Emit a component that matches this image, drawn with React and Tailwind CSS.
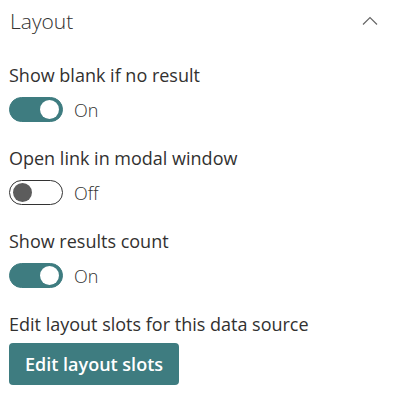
import { useState } from 'react';

function Toggle({ checked, onChange }) {
	return (
		<button
			type="button"
			onClick={onChange}
			className="flex items-center gap-[11px]"
		>
			<span
				className={`flex h-[25px] w-[54px] items-center rounded-full px-[3px] ${
					checked
						? 'justify-end border border-[#3e7c80] bg-[#3e7c80]'
						: 'justify-start border-[1.5px] border-[#333333] bg-white'
				}`}
			>
				<span
					className={`h-[19px] w-[19px] rounded-full ${checked ? 'bg-white' : 'bg-[#5c5c5c]'}`}
				/>
			</span>
			<span className="text-[18px] leading-6 font-light text-[#323130]">{checked ? 'On' : 'Off'}</span>
		</button>
	);
}

export default function App() {
	const [blank, setBlank] = useState(true);
	const [modal, setModal] = useState(false);
	const [count, setCount] = useState(true);

	const rows = [
		{ label: 'Show blank if no result', value: blank, set: setBlank },
		{ label: 'Open link in modal window', value: modal, set: setModal },
		{ label: 'Show results count', value: count, set: setCount },
	];

	return (
		<div className="min-h-[396px] w-[410px] bg-white px-[9px] font-['Open_Sans',sans-serif] text-[#323130]">
			<div className="flex h-[44px] items-center justify-between">
				<h2 className="pl-px text-[21px] font-light text-[#323130]">Layout</h2>
				<svg width="16" height="10" viewBox="0 0 16 10" className="mr-[23px] mb-[3px]">
					<path d="M1 8.5 L8 1.5 L15 8.5" fill="none" stroke="#666" strokeWidth="1.2" />
				</svg>
			</div>

			<div className="mt-[19px]">
				{rows.map((r) => (
					<div key={r.label} className="mb-[24px]">
						<div className="text-[18px] leading-6">{r.label}</div>
						<div className="mt-[10px]">
							<Toggle checked={r.value} onChange={() => r.set(!r.value)} />
						</div>
					</div>
				))}
				<div className="mt-px text-[18px] leading-6">Edit layout slots for this data source</div>
				<button
					type="button"
					className="mt-[7px] h-[42px] w-[170px] rounded-[4px] bg-[#3e7c80] text-[18px] font-semibold text-white"
				>
					Edit layout slots
				</button>
			</div>
		</div>
	);
}
